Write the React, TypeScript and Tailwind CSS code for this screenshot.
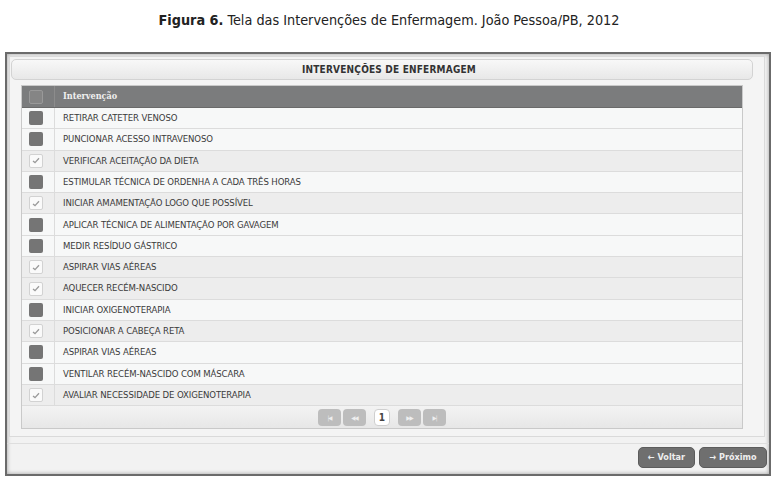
import React from "react";

const rows: [string, boolean][] = [
  ["RETIRAR CATETER VENOSO", false],
  ["PUNCIONAR ACESSO INTRAVENOSO", false],
  ["VERIFICAR ACEITAÇÃO DA DIETA", true],
  ["ESTIMULAR TÉCNICA DE ORDENHA A CADA TRÊS HORAS", false],
  ["INICIAR AMAMENTAÇÃO LOGO QUE POSSÍVEL", true],
  ["APLICAR TÉCNICA DE ALIMENTAÇÃO POR GAVAGEM", false],
  ["MEDIR RESÍDUO GÁSTRICO", false],
  ["ASPIRAR VIAS AÉREAS", true],
  ["AQUECER RECÉM-NASCIDO", true],
  ["INICIAR OXIGENOTERAPIA", false],
  ["POSICIONAR A CABEÇA RETA", true],
  ["ASPIRAR VIAS AÉREAS", false],
  ["VENTILAR RECÉM-NASCIDO COM MÁSCARA", false],
  ["AVALIAR NECESSIDADE DE OXIGENOTERAPIA", true],
];

function Check({ on }: { on: boolean }) {
  if (!on)
    return <div className="w-[14px] h-[14px] rounded-[2px] bg-[#757575]" />;
  return (
    <div className="w-[14px] h-[14px] rounded-[2px] bg-[#fafafa] border border-[#d2d2d2] flex items-center justify-center">
      <svg width="8" height="7" viewBox="0 0 8 7">
        <path d="M1 4 L3 5.6 L7 1.2" fill="none" stroke="#9a9a9a" strokeWidth="1.3" />
      </svg>
    </div>
  );
}

function PgBtn({ children }: { children: React.ReactNode }) {
  return (
    <div className="w-[23px] h-[17px] rounded-[4px] bg-[#bdbdbd] flex items-center justify-center text-[6px] text-[#eeeeee] tracking-[-1px]">
      {children}
    </div>
  );
}

export default function App() {
  return (
    <div className="w-[778px] h-[484px] bg-white relative overflow-hidden">
      <div
        className="h-[52px] pt-[10px] text-center text-[14.3px] text-[#222] leading-[20px]"
        style={{ fontFamily: '"DejaVu Sans Condensed", "DejaVu Sans", sans-serif' }}
      >
        <span className="font-bold">Figura 6.</span> Tela das Intervenções de Enfermagem. João Pessoa/PB, 2012
      </div>
      <div
        className="ml-[5px] w-[766px] h-[424px] border-2 border-[#6b6b6b] bg-[#f2f2f2] shadow-[inset_0_0_4px_rgba(0,0,0,0.35)] flex flex-col"
        style={{ fontFamily: '"DejaVu Sans Condensed", "DejaVu Sans", sans-serif' }}
      >
        <div className="ml-[2px] mt-[2px] w-[756px] h-[381px] border border-[#dadada] bg-[#f4f4f4] flex flex-col">
          <div className="ml-[1px] mt-[2px] w-[742px] h-[21px] pl-[14px] rounded-[5px] border border-[#d3d3d3] bg-gradient-to-b from-[#f8f8f8] to-[#e8e8e8] flex items-center justify-center text-[10px] tracking-[0.2px] font-bold text-[#333]">
            INTERVENÇÕES DE ENFERMAGEM
          </div>
          <div className="ml-[11px] mt-[5px] w-[722px] h-[344px] border border-[#c9c9c9] bg-[#f7f8f8] flex flex-col">
            <div className="h-[22px] bg-[#7b7c7d] flex border-b border-[#6a6a6a] shrink-0">
              <div className="w-[33px] border-r border-[#8c8c8c] flex items-center pl-[7px]">
                <div className="w-[14px] h-[14px] rounded-[2px] bg-[#858585] border border-[#999]" />
              </div>
              <div className="pl-[8px] flex items-center text-[9px] font-bold text-[#f0f0f0]" style={{ fontFamily: '"DejaVu Serif Condensed", "DejaVu Serif", serif' }}>
                Intervenção
              </div>
            </div>
            {rows.map(([t, on], i) => (
              <div
                key={i}
                className={`h-[21.3px] flex border-b border-[#dcdcdc] shrink-0 ${on ? "bg-[#ededed]" : "bg-[#f7f8f8]"}`}
              >
                <div className="w-[33px] border-r border-[#dcdcdc] flex items-center pl-[7px]">
                  <Check on={on} />
                </div>
                <div className="pl-[8px] flex items-center text-[9.5px] text-[#3a3a3a] tracking-[-0.1px]">{t}</div>
              </div>
            ))}
            <div className="flex-1 bg-gradient-to-b from-[#f3f3f3] to-[#e7e7e7] flex items-center justify-center gap-[2px]">
              <PgBtn>|◀</PgBtn>
              <PgBtn>◀◀</PgBtn>
              <div className="mx-[6px] w-[16px] h-[17px] rounded-[4px] bg-white border border-[#cfcfcf] flex items-center justify-center text-[10px] font-bold text-[#444]">
                1
              </div>
              <PgBtn>▶▶</PgBtn>
              <PgBtn>▶|</PgBtn>
            </div>
          </div>
        </div>
        <div className="mt-[6px] border-t border-[#dedede] flex-1 flex justify-end items-start pt-[3px] pr-[2px] gap-[4px]">
          <div className="w-[57px] h-[21px] rounded-[5px] bg-[#6f6f6f] border border-[#5c5c5c] flex items-center justify-center text-[9px] font-bold text-[#eeeeee]">
            ← Voltar
          </div>
          <div className="w-[68px] h-[21px] rounded-[5px] bg-[#6f6f6f] border border-[#5c5c5c] flex items-center justify-center text-[9px] font-bold text-[#eeeeee]">
            → Próximo
          </div>
        </div>
      </div>
    </div>
  );
}
